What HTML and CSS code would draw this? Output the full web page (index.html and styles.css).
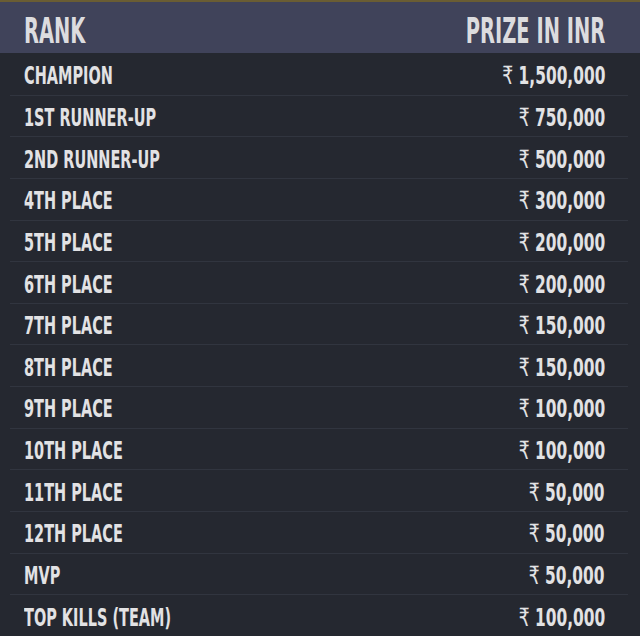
FILE: index.html
```html
<!DOCTYPE html>
<html>
<head>
<meta charset="utf-8">
<link rel="stylesheet" href="styles.css">
</head>
<body>
<div class="board">
  <div class="head">
    <span class="t l hs">RANK</span>
    <span class="t r hs">PRIZE IN INR</span>
  </div>
  <div class="rows">
    <div class="row"><span class="t l">CHAMPION</span><span class="t r n"><span class="rs">₹</span> 1,500,000</span></div>
    <div class="row"><span class="t l">1ST RUNNER-UP</span><span class="t r n"><span class="rs">₹</span> 750,000</span></div>
    <div class="row"><span class="t l">2ND RUNNER-UP</span><span class="t r n"><span class="rs">₹</span> 500,000</span></div>
    <div class="row"><span class="t l">4TH PLACE</span><span class="t r n"><span class="rs">₹</span> 300,000</span></div>
    <div class="row"><span class="t l">5TH PLACE</span><span class="t r n"><span class="rs">₹</span> 200,000</span></div>
    <div class="row"><span class="t l">6TH PLACE</span><span class="t r n"><span class="rs">₹</span> 200,000</span></div>
    <div class="row"><span class="t l">7TH PLACE</span><span class="t r n"><span class="rs">₹</span> 150,000</span></div>
    <div class="row"><span class="t l">8TH PLACE</span><span class="t r n"><span class="rs">₹</span> 150,000</span></div>
    <div class="row"><span class="t l">9TH PLACE</span><span class="t r n"><span class="rs">₹</span> 100,000</span></div>
    <div class="row"><span class="t l">10TH PLACE</span><span class="t r n"><span class="rs">₹</span> 100,000</span></div>
    <div class="row"><span class="t l">11TH PLACE</span><span class="t r n"><span class="rs">₹</span> 50,000</span></div>
    <div class="row"><span class="t l">12TH PLACE</span><span class="t r n"><span class="rs">₹</span> 50,000</span></div>
    <div class="row"><span class="t l">MVP</span><span class="t r n"><span class="rs">₹</span> 50,000</span></div>
    <div class="row"><span class="t l">TOP KILLS (TEAM)</span><span class="t r n"><span class="rs">₹</span> 100,000</span></div>
  </div>
</div>
</body>
</html>
```
FILE: styles.css
```css
html, body {
  margin: 0;
  padding: 0;
  background: #252830;
}
.board {
  width: 640px;
  height: 636px;
  border-top: 2px solid #6a5d33;
  box-sizing: border-box;
  font-family: "DejaVu Sans Condensed", "Liberation Sans", sans-serif;
  font-weight: bold;
  color: #e2e2e4;
}
.head {
  height: 51px;
  box-sizing: border-box;
  background: #40435a;
  display: flex;
  justify-content: space-between;
  align-items: center;
  padding: 5px 35px 0 24px;
  font-size: 36px;
  color: #dcdcdf;
}
.rows {
  height: 583px;
  display: grid;
  grid-template-rows: repeat(14, 1fr);
  padding: 0 12px 0 10px;
}
.row {
  display: flex;
  justify-content: space-between;
  align-items: center;
  border-top: 1px solid #31353f;
  padding: 3px 23px 0 14px;
  font-size: 25px;
}
.row:first-child {
  border-top: none;
}
.t {
  display: inline-block;
  white-space: nowrap;
  transform: scaleX(0.644);
}
.hs { transform: scaleX(0.6); }
.n { transform: scaleX(0.685); }
.l { transform-origin: left center; }
.r { transform-origin: right center; }
.rs {
  font-weight: normal;
  font-family: "DejaVu Sans", sans-serif;
  font-size: 1em;
}
```
